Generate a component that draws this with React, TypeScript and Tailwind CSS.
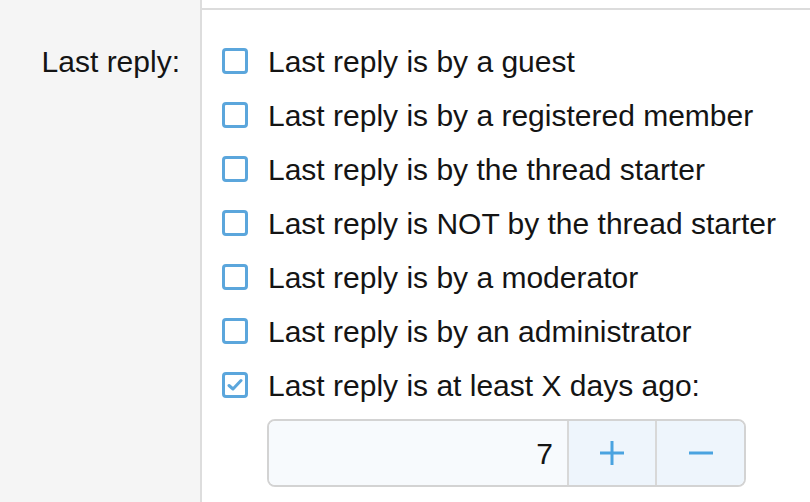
import React from 'react';

const options = [
  { label: 'Last reply is by a guest', checked: false },
  { label: 'Last reply is by a registered member', checked: false },
  { label: 'Last reply is by the thread starter', checked: false },
  { label: 'Last reply is NOT by the thread starter', checked: false },
  { label: 'Last reply is by a moderator', checked: false },
  { label: 'Last reply is by an administrator', checked: false },
  { label: 'Last reply is at least X days ago:', checked: true },
];

function Checkbox({ checked }: { checked: boolean }) {
  return (
    <span className="flex h-[26px] w-[26px] shrink-0 items-center justify-center rounded-[4px] border-[3px] border-[#5ba6dc] bg-white">
      {checked && (
        <svg width="16" height="14" viewBox="0 0 16 14" fill="none">
          <path d="M2 7.5 L6 11 L14 2.5" stroke="#5ba6dc" strokeWidth="3" strokeLinecap="round" strokeLinejoin="round" />
        </svg>
      )}
    </span>
  );
}

export default function App() {
  return (
    <div className="flex h-[502px] w-[810px] overflow-hidden font-['Liberation_Sans',Arial,sans-serif] text-[30px] text-[#141414]">
      <div className="w-[200px] shrink-0 bg-[#f5f5f5] pt-[34px]">
        <div className="flex h-[54px] items-center justify-end pr-[20px]">Last reply:</div>
      </div>
      <div className="flex-1 border-l-2 border-[#dddddd] bg-white">
        <div className="h-[10px] border-b-2 border-[#dcdcdc]" />
        <div className="flex flex-col pl-[20px] pt-[24px]">
          {options.map((o) => (
            <div key={o.label} className="flex h-[54px] items-center gap-[20px]">
              <Checkbox checked={o.checked} />
              <span className="whitespace-nowrap">{o.label}</span>
            </div>
          ))}
          <div className="ml-[45px] mt-[7px] flex h-[68px] w-[479px] overflow-hidden rounded-[8px] border-2 border-[#d3d3d3]">
            <div className="flex flex-1 items-center justify-end bg-[#f7fafd] pr-[14px]">7</div>
            <div className="flex w-[88px] items-center justify-center border-l-2 border-[#d8d8d8] bg-[#eef5fc]">
              <svg width="24" height="24" viewBox="0 0 24 24">
                <path d="M12 0 V24 M0 12 H24" stroke="#4aa3e0" strokeWidth="3" />
              </svg>
            </div>
            <div className="flex w-[89px] items-center justify-center border-l-2 border-[#d8d8d8] bg-[#eef5fc]">
              <svg width="24" height="24" viewBox="0 0 24 24">
                <path d="M0 12 H24" stroke="#4aa3e0" strokeWidth="3" />
              </svg>
            </div>
          </div>
        </div>
      </div>
    </div>
  );
}
